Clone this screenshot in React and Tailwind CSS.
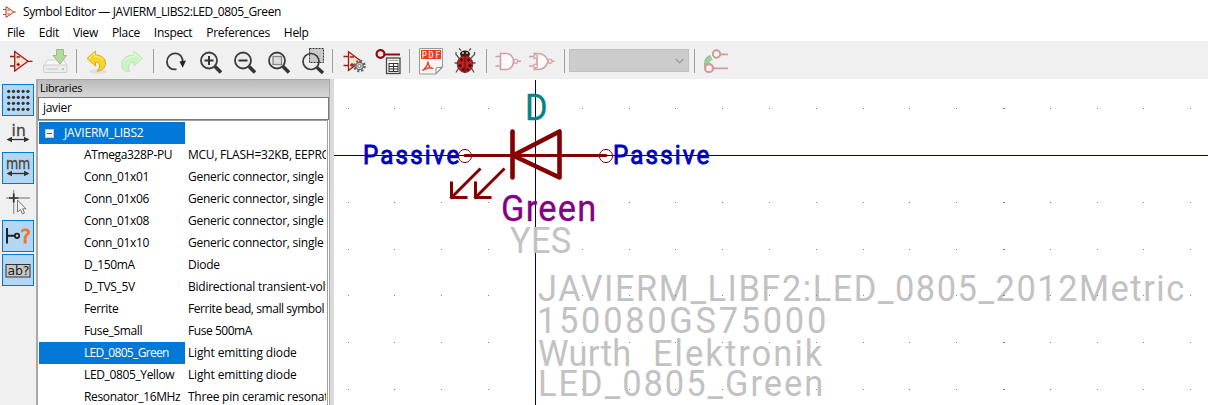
import React from "react";

const RED = "#a01818";

// Each tool draws in toolbar coordinates; x and w give its slot.
function Tool({ x, w, children }) {
  return (
    <svg className="block h-[38px] shrink-0" width={w} viewBox={`${x} 41 ${w} 38`} fill="none">
      {children}
    </svg>
  );
}

function Sep({ x, w }) {
  return (
    <Tool x={x} w={w}>
      <path d={`M${x + Math.floor(w / 2) + 0.5} 49V73`} stroke="#a0a0a0" />
    </Tool>
  );
}

function Lens({ cx, children }) {
  return (
    <g>
      <circle cx={cx - 2} cy="60.5" r="8" stroke="#3c3c3c" strokeWidth="1.8" fill="#ededed" />
      <path d={`M${cx + 4} 66.5L${cx + 10} 72.5`} stroke="#333" strokeWidth="3.6" />
      {children}
    </g>
  );
}

function OpAmp() {
  return (
    <g stroke={RED} strokeWidth="1.3">
      <path d="M14.7 51.5V71L28 61.3Z" fill="#f6e6cb" />
      <path d="M10 56.5H14.5M10 66H14.5M28 61.3H32.5M16.5 57H20M16.5 64.5H20M18.2 62.7V66.3" />
    </g>
  );
}

function Toolbar() {
  return (
    <div className="flex h-[38px] shrink-0 items-start bg-[#f0f0f0]">
      <Tool x={0} w={38}><OpAmp /></Tool>
      <Tool x={38} w={34}>
        <path d="M47 60H64L67 66H43.5Z" fill="#f7f7f7" stroke="#d3d3d3" />
        <rect x="43.5" y="65" width="23.5" height="7.5" rx="1" fill="#ececec" stroke="#cdcdcd" />
        <path d="M46 69H58" stroke="#dadada" strokeWidth="2" />
        <rect x="62" y="68" width="2" height="2" fill="#8fe08a" />
        <path d="M56.5 49.5H63.5V55.5H66.5L60 64L53 55.5H56.5Z" fill="#b3dc96" stroke="#a0b595" />
      </Tool>
      <Sep x={72} w={9} />
      <Tool x={81} w={34}>
        <ellipse cx="98" cy="71.5" rx="9" ry="2.5" fill="#e0e0e0" />
        <path d="M87 58.5L95.5 51V55C102 55 106 59 105.5 64C105 68.500 101 71 97 71.200C100 69 101 62 95.500 62V66Z" fill="#f4d52a" stroke="#dca91b" />
        <path d="M89 58.3L94.700 53.300V56.500C98 56.600 101 57.500 103 60" stroke="#fff09a" strokeWidth="1" />
      </Tool>
      <Tool x={115} w={34}>
        <path d="M142.500 58.500L134 51V55C127 55 121.500 59 121.500 64.500C121.500 69 125 72 130 71.500C127 68 129 62 134 62V66Z" fill="#cdf3c4" stroke="#b9e6b0" />
        <path d="M140.500 58.400L134.800 53.300V56.500C131 56.600 127 57.500 125 60" stroke="#e6fbe0" />
      </Tool>
      <Sep x={149} w={9} />
      <Tool x={158} w={35}>
        <path d="M176.500 69.200C171 70.500 167 66.500 167 61.800C167 56.500 171 53.300 175.200 53.300C180 53.300 183 57 182.800 63" stroke="#3c3c3c" strokeWidth="1.700" />
        <path d="M179.500 61.500L186 60.500L182.700 67.800Z" fill="#222" />
      </Tool>
      <Tool x={193} w={35}>
        <Lens cx={211}><path d="M204.500 60.500H213.500M209 56V65" stroke="#333" strokeWidth="2" /></Lens>
      </Tool>
      <Tool x={228} w={34}>
        <Lens cx={245}><path d="M238.500 60.500H247.500" stroke="#333" strokeWidth="2" /></Lens>
      </Tool>
      <Tool x={262} w={34}>
        <Lens cx={279}><rect x="273" y="56.500" width="8.500" height="8" fill="#ddd" stroke="#888" strokeWidth="1.300" /></Lens>
      </Tool>
      <Tool x={296} w={32}>
        <rect x="309.500" y="48.500" width="14" height="14" fill="#c9c9c9" />
        <circle cx="311" cy="61.500" r="8" stroke="#3c3c3c" strokeWidth="1.700" />
        <path d="M317 67.500L323 73" stroke="#333" strokeWidth="3.400" />
        <rect x="309.500" y="48.500" width="14" height="14" stroke="#333" strokeDasharray="2 1" />
      </Tool>
      <Sep x={328} w={9} />
      <Tool x={337} w={35}>
        <path d="M348.500 51.700V70.500L361 61Z" fill="#f6e6cb" stroke={RED} strokeWidth="1.300" />
        <path d="M343.500 56.500H348M343.500 65.500H348M350 57H354M350 65H354M352 63V67" stroke={RED} strokeWidth="1.300" />
        <circle cx="359.500" cy="66" r="5" stroke="#666" strokeWidth="2.600" strokeDasharray="2 1.930" />
        <circle cx="359.500" cy="66" r="3.700" fill="#ccc" stroke="#666" strokeWidth="1.200" />
        <circle cx="359.500" cy="66" r="1.500" fill="#fff" stroke="#666" strokeWidth=".8" />
      </Tool>
      <Tool x={372} w={33}>
        <circle cx="380.500" cy="54" r="3.900" fill="#f0f0f0" stroke="#900c0c" strokeWidth="2.200" />
        <path d="M384.500 54.500H400" stroke="#900c0c" strokeWidth="2" />
        <rect x="386.500" y="58" width="13.500" height="15.500" fill="#f7f7f7" stroke="#444" strokeWidth="1.300" />
        <path d="M388.500 60.300H398.500" stroke="#999" />
        <path d="M389 63.500H398M389 66.500H398M389 69H398M389 71.500H398M389 63V72M393.500 63V72M398 63V72" stroke="#333" strokeWidth="1" />
      </Tool>
      <Sep x={405} w={9} />
      <Tool x={414} w={34}>
        <path d="M419.500 48.500H442.500V67.500L436 74H419.500Z" fill="#f7f7f7" stroke="#999" />
        <rect x="421" y="50" width="20" height="9" fill="#e93d1d" />
        <text x="421.700" y="57.500" fontSize="8.500" fill="#fff" fontFamily="DejaVu Sans Mono, monospace" textLength="18.500">PDF</text>
        <path d="M422.500 70.500C424.500 69.500 428 65 428 61.500C428 66.500 431 68.500 433 68.500C430 67 425.500 68.500 422.500 70.500Z" stroke="#e4452a" strokeWidth="1.400" />
        <path d="M436 73.500V68L442 67Z" fill="#fff" stroke="#888" />
      </Tool>
      <Tool x={448} w={34}>
        <path d="M461 50.500L459 48.500M469 50.500L471 48.500M459 58L456 54.500V52M471 58L474.500 54.500V52M458 63H454.500M472 63H475.500M458.500 68L456 72.500M471.500 68L474 72.500" stroke="#555" strokeWidth="1.300" />
        <ellipse cx="465" cy="54" rx="5" ry="3.500" fill="#222" />
        <path d="M462 53H468" stroke="#e5d765" strokeWidth="1.500" strokeDasharray="2 2" />
        <ellipse cx="465" cy="64" rx="7.800" ry="8.500" fill="#c41e22" stroke="#5a1a1a" strokeWidth=".8" />
        <path d="M465 56V72.500" stroke="#551010" />
        <g fill="#2c1010"><circle cx="461.500" cy="60" r="1.400" /><circle cx="468.500" cy="60" r="1.400" /><circle cx="460" cy="65.500" r="1.500" /><circle cx="470" cy="65.500" r="1.500" /><circle cx="463" cy="69.500" r="1.200" /><circle cx="467.500" cy="69.500" r="1.200" /></g>
      </Tool>
      <Sep x={482} w={9} />
      <Tool x={491} w={34}>
        <path d="M500.500 53.500H506C516 53.500 516 69.500 506 69.500H500.500Z" fill="#fbfbfb" stroke="#d3a0a0" strokeWidth="1.600" />
        <path d="M495.500 56.500H500.500M495.500 66H500.500M518 61.300H521" stroke="#d3a0a0" strokeWidth="1.600" />
        <circle cx="515.800" cy="61.300" r="2" fill="#fff" stroke="#d3a0a0" strokeWidth="1.300" />
      </Tool>
      <Tool x={525} w={34}>
        <path d="M534.500 53.500H539C545 54 547 58 548 61.300C547 65 545 69 539 69.500H534.500C538 65 538 58 534.500 53.500Z" fill="#fbfbfb" stroke="#d3a0a0" strokeWidth="1.600" />
        <path d="M529 56.500H533M529 66H533M552 61.300H554.500" stroke="#d3a0a0" strokeWidth="1.600" />
        <circle cx="550" cy="61.300" r="2" fill="#fff" stroke="#d3a0a0" strokeWidth="1.300" /><circle cx="535.500" cy="56.500" r="1.900" fill="#fff" stroke="#d3a0a0" strokeWidth="1.300" /><circle cx="535.500" cy="66" r="1.900" fill="#fff" stroke="#d3a0a0" strokeWidth="1.300" />
      </Tool>
      <Sep x={559} w={10} />
      <div className="mt-[8px] flex h-[23px] w-[120px] shrink-0 items-center justify-end border border-[#bfbfbf] bg-[#cccccc] pr-[4px]">
        <svg width="9" height="6" fill="none"><path d="M.7 1L4.500 4.800L8.300 1" stroke="#999" strokeWidth="1.200" /></svg>
      </div>
      <Sep x={689} w={11} />
      <Tool x={700} w={34}>
        <path d="M706.500 65.500C706 60 709 57.500 714 56.500" stroke="#9aa79a" strokeWidth="5" />
        <path d="M706.500 65C706.500 60.500 709 58 714 57" stroke="#8fdb98" strokeWidth="3.600" />
        <path d="M710.500 53.500L714.500 60.500" stroke="#f7f7f7" strokeWidth="2.200" />
        <circle cx="716.500" cy="54" r="3.700" fill="#f4f4f4" stroke="#d09a9a" strokeWidth="2" /><path d="M720 54.300H728M713 68.300H728" stroke="#d09a9a" strokeWidth="1.800" />
        <circle cx="709" cy="68.200" r="4" fill="#f4f4f4" stroke="#d09a9a" strokeWidth="2.200" />
      </Tool>
    </div>
  );
}

function SideButton({ on, children }) {
  return (
    <div className={on ? "h-8 w-8 border border-[#0078d7] bg-[#b3d7f3]" : "h-8 w-8 border border-transparent"}>
      <svg width="30" height="30" viewBox="1 1 30 30" fill="none">{children}</svg>
    </div>
  );
}

function UnitArrow() {
  return (
    <g>
      <path d="M6 21.500H26" stroke="#333" strokeWidth="1.300" />
      <path d="M4.500 21.500L10 18.800V24.200ZM27.500 21.500L22 18.800V24.200Z" fill="#333" />
    </g>
  );
}

const gridDots = [0, 1, 2, 3].flatMap((r) => [0, 1, 2, 3, 4].map((c) => [c, r]));

function SideBar() {
  return (
    <div className="flex w-9 shrink-0 flex-col gap-[2px] bg-[#f0f0f0] pl-[2px] pt-[5px]">
      <SideButton on>
        {gridDots.map(([c, r]) => <circle key={`${c}-${r}`} cx={6.700 + c * 4.800} cy={7.300 + r * 6} r="1.600" fill="#333" />)}
      </SideButton>
      <SideButton>
        <text x="9.500" y="17.500" fontSize="15.500" fill="#444" stroke="#444" strokeWidth=".3" fontFamily="DejaVu Sans, sans-serif" textLength="14">in</text>
        <UnitArrow />
      </SideButton>
      <SideButton on>
        <text x="4" y="16.500" fontSize="15" fill="#444" stroke="#444" strokeWidth=".3" fontFamily="DejaVu Sans, sans-serif" textLength="24" lengthAdjust="spacingAndGlyphs">mm</text>
        <UnitArrow />
      </SideButton>
      <SideButton>
        <path d="M4 12H28M11.700 4V28" stroke="#999" strokeWidth="1.300" />
        <path d="M7 12H16.500M11.700 7.500V16.500" stroke="#333" strokeWidth="1.700" />
        <path d="M15.500 14V26L18.500 23.500L20.500 28L22.500 27L20.700 22.800H24Z" fill="#f0f0f0" stroke="#777" />
      </SideButton>
      <SideButton on>
        <path d="M5 8V23.500M5 15.800H13" stroke="#222" strokeWidth="2" />
        <circle cx="15" cy="15.800" r="2.200" stroke="#222" strokeWidth="1.800" />
        <text x="18.500" y="23" fontSize="20" fill="#f37321" stroke="#f37321" strokeWidth=".9" fontFamily="DejaVu Sans, sans-serif">?</text>
      </SideButton>
      <SideButton on>
        <rect x="4" y="10.500" width="24" height="12.500" fill="#c8c8c8" stroke="#333" />
        <text x="5.500" y="21" fontSize="12.500" fill="#222" fontFamily="DejaVu Sans, sans-serif" textLength="21.500">ab?</text>
      </SideButton>
    </div>
  );
}

const rows = [
  ["ATmega328P-PU", "MCU, FLASH=32KB, EEPROM"],
  ["Conn_01x01", "Generic connector, single row"],
  ["Conn_01x06", "Generic connector, single row"],
  ["Conn_01x08", "Generic connector, single row"],
  ["Conn_01x10", "Generic connector, single row"],
  ["D_150mA", "Diode"],
  ["D_TVS_5V", "Bidirectional transient-voltage"],
  ["Ferrite", "Ferrite bead, small symbol"],
  ["Fuse_Small", "Fuse 500mA"],
  ["LED_0805_Green", "Light emitting diode"],
  ["LED_0805_Yellow", "Light emitting diode"],
  ["Resonator_16MHz", "Three pin ceramic resonator"],
];

const descTracking = {
  Ferrite: "tracking-[-0.43px]",
  Fuse_Small: "tracking-[-0.45px]",
  LED_0805_Green: "tracking-[-0.15px]",
  LED_0805_Yellow: "tracking-[-0.15px]",
};

function Libraries() {
  return (
    <div className="flex w-[294px] shrink-0 flex-col overflow-hidden border-l-2 border-r border-t border-[#a8a8a8] bg-white">
      <div className="flex h-[17px] shrink-0 items-center bg-linear-to-b from-[#bababa] to-[#d8d8d8] pb-[2px] pl-[2px] text-[11px] tracking-[-0.25px]">Libraries</div>
      <div className="flex h-[23px] shrink-0 items-center border border-[#7a7a7a] pb-px pl-1">javier</div>
      <div className="mr-px flex min-h-0 flex-1 flex-col border-r border-t border-[#a0a0a0] pl-px pr-px pt-px">
        <div className="flex h-[22px] w-[146px] shrink-0 items-center bg-[#0078d7] text-white">
          <svg className="ml-[6px] mr-[10px] shrink-0" width="9" height="9"><rect x=".5" y=".5" width="8" height="8" fill="#f4f4f4" stroke="#c5cbd2" /><path d="M2 4.500H7" stroke="#3c5c9a" /></svg>
          <span className="tracking-[-0.22px]">JAVIERM_LIBS2</span>
        </div>
        {rows.map(([name, desc]) => (
          <div key={name} className="flex h-[22px] shrink-0 items-center">
            <div className={name === "LED_0805_Green" ? "flex h-[22px] w-[146px] shrink-0 items-center bg-[#0078d7] pl-[45px] tracking-[-0.66px] text-white" : "flex h-[22px] w-[146px] shrink-0 items-center pl-[45px] tracking-[-0.36px]"}>{name}</div>
            <div className={`min-w-0 flex-1 overflow-hidden whitespace-nowrap pl-[3px] ${descTracking[name] || "tracking-[-0.24px]"}`}>{desc}</div>
          </div>
        ))}
      </div>
    </div>
  );
}

const dotX = [348, 394, 441, 488, 582, 629, 675, 722, 769, 816, 863, 909, 956, 1003, 1050, 1097, 1143, 1190];
const dotY = [108, 202, 249, 295, 342, 389];

const SQUEEZE = 0.93;

// Narrow glyphs with open spacing, like plotter lettering.
function Label({ x, y, w, size = 37, color = "#c2c2c2", bold = 0, children }) {
  return (
    <text transform={`translate(${x} ${y}) scale(${SQUEEZE} 1)`} fontSize={size} fill={color} stroke={color} strokeWidth={bold} textLength={w / SQUEEZE} lengthAdjust="spacing">{children}</text>
  );
}

function Canvas() {
  return (
    <svg className="block shrink-0" width="874" height="326" viewBox="334 79 874 326" fill="none" fontFamily="Roboto, sans-serif">
      <g shapeRendering="crispEdges">
        <path d="M334 155.500H1208M535.500 80V405" stroke="#000070" />
      </g>
      <Label x={538} y={301} w={646}>JAVIERM_LIBF2:LED_0805_2012Metric</Label>
      <Label x={537} y={333} w={289}>150080GS75000</Label>
      <Label x={538} y={366} w={93}>Wurth</Label>
      <Label x={653} y={366} w={169}>Elektronik</Label>
      <Label x={538} y={396} w={285}>LED_0805_Green</Label>
      <Label x={510} y={253} w={61}>YES</Label>
      <Label x={501} y={221} w={95} bold={0.3} color="#840084">Green</Label>
      <Label x={525} y={120} w={22} bold={0.3} color="#008484">D</Label>
      <Label x={363} y={164} w={96} size={26} bold={0.9} color="#0000c2">Passive</Label>
      <Label x={613} y={164} w={96} size={26} bold={0.9} color="#0000c2">Passive</Label>
      <g fill="#848484" shapeRendering="crispEdges">
        {dotX.flatMap((x) => dotY.map((y) => <rect key={`${x}-${y}`} x={x} y={y} width={x === 1003 ? 2 : 1} height="1" />))}
      </g>
      <g stroke="#840000" strokeLinecap="round" strokeLinejoin="round">
        <path d="M465 155.500H606" strokeWidth="3" />
        <path d="M512.500 131.500V177.500M559.500 131.500V177.500L513 155.500Z" strokeWidth="4.600" />
        <path d="M479.500 169.500L451.500 197.500M451.500 183V197.500H466M503.500 169.500L475.500 197.500M475.500 183V197.500H490" strokeWidth="3" strokeLinecap="square" />
        <circle cx="465" cy="156" r="6.600" strokeWidth="1" /><circle cx="606" cy="156" r="6.600" strokeWidth="1" />
      </g>
    </svg>
  );
}

export default function App() {
  return (
    <div className="flex h-[405px] w-[1208px] flex-col overflow-hidden bg-white font-['Open_Sans','Noto_Sans',sans-serif] text-[12px] leading-4 tracking-[-0.3px] text-black">
      <div className="flex h-6 shrink-0 items-center pl-[3px]">
        <svg className="mr-[7px]" width="13" height="14" fill="none"><path d="M3 1.500V12.500L11 7Z" fill="#f6e6cb" stroke="#b54a40" /><path d="M0 4.500H3M0 9.500H3M11 7H13M4.500 5H6.500M4.500 9H6.500" stroke="#b54a40" /></svg>
        <span className="tracking-[-0.4px]">Symbol Editor — JAVIERM_LIBS2:LED_0805_Green</span>
      </div>
      <div className="flex h-[17px] shrink-0 items-center gap-[14px] pl-[7px]">
        {["File", "Edit", "View", "Place", "Inspect", "Preferences", "Help"].map((m) => <span key={m}>{m}</span>)}
      </div>
      <Toolbar />
      <div className="flex min-h-0 flex-1">
        <SideBar />
        <Libraries />
        <div className="w-1 shrink-0 bg-[#dadada]" />
        <Canvas />
      </div>
    </div>
  );
}
